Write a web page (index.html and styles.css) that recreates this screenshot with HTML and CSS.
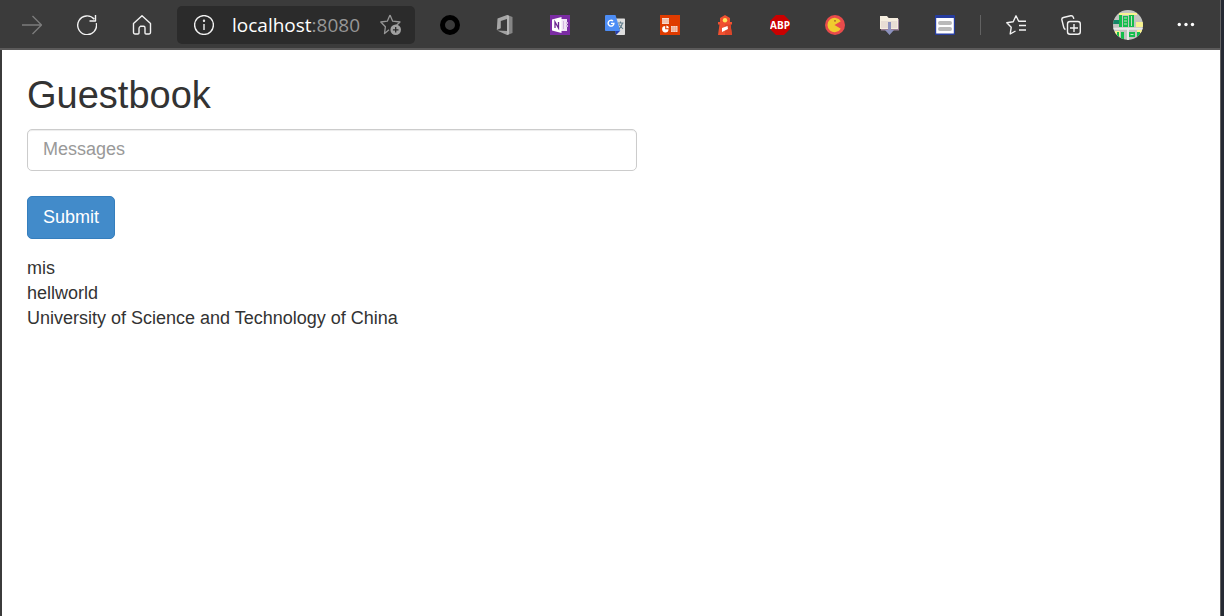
FILE: index.html
```html
<!DOCTYPE html>
<html lang="en">
<head>
<meta charset="utf-8">
<meta name="viewport" content="width=device-width, initial-scale=1">
<title>Guestbook</title>
<link rel="stylesheet" href="styles.css">
</head>
<body>
<div class="browser">
  <header class="toolbar">
    <button class="tool" type="button" aria-label="Forward" disabled>
      <svg class="icon line dim" viewBox="0 0 20 20"><path d="M0 10h19.500M10.500 1l9 9-9 9"/></svg>
    </button>
    <button class="tool" type="button" aria-label="Refresh">
      <svg class="icon line" viewBox="0 0 20 20"><path d="M19.300 8.200A9.400 9.400 0 1 1 17.300 4.200M18.500 0v6h-6"/></svg>
    </button>
    <button class="tool" type="button" aria-label="Home">
      <svg class="icon line" viewBox="0 0 20 20"><path d="M1.500 8.600 10 .7l8.500 7.900v9q0 1.400-1.400 1.400h-3q-1.100 0-1.100-1.100v-5.200q0-1.400-1.400-1.400H8.400Q7 12 7 13.400v4.500Q7 19 5.900 19h-3q-1.400 0-1.400-1.400z"/></svg>
    </button>
    <div class="address">
      <button class="address-tool" type="button" aria-label="Site information">
        <svg class="icon line" viewBox="0 0 20 20"><circle cx="10" cy="10" r="9.400"/><path d="M10 9v6"/><circle cx="10" cy="5.800" r=".5"/></svg>
      </button>
      <a class="url" href="#">localhost<span class="port">:8080</span></a>
      <button class="address-tool" type="button" aria-label="Add to favorites">
        <svg class="star-icon" viewBox="0 0 22 22"><path d="M10 1 12.700 7.200 20 8 15.500 12.200M9 15.700 4.500 19.500 5.400 12.700.8 8 7.300 7.200 10 1" fill="none" stroke="#969696" stroke-width="1.300" stroke-linejoin="round"/><circle cx="15.700" cy="15.800" r="5.300" fill="#a0a0a0"/><path d="M15.700 13v5.600M12.900 15.800h5.600" stroke="#2b2b2b" stroke-width="1.300"/></svg>
      </button>
    </div>
    <nav class="extensions" aria-label="Extensions">
      <button class="tool" type="button" aria-label="Ring extension">
        <svg class="icon" viewBox="0 0 20 20"><circle cx="10" cy="10" r="7.500" fill="none" stroke="#000" stroke-width="5"/></svg>
      </button>
      <button class="tool" type="button" aria-label="Office">
        <svg class="icon" viewBox="0 0 20 20"><path d="M12 0 2.500 3.600 1.800 15l4-1.800V6L12 4z" fill="#a6a6a6"/><path d="M12 0l5.500 2v16L12 20z" fill="#858585"/><path d="M12 0l2 .7v18.500L12 20z" fill="#b4b4b4"/><path d="M2 15.500 12 16v4z" fill="#a0a0a0"/></svg>
      </button>
      <button class="tool" type="button" aria-label="OneNote">
        <svg class="icon" viewBox="0 0 20 20"><path d="M0 0h20v20H0z" fill="#7b2ca4"/><path d="M11 4h6v12h-6z" fill="#f0e4f5"/><path d="M13 6h1v8h-1zM16 7h2v2h-2zm0 3h2v2h-2z" fill="#d3b5e0"/><path d="M2 4.500 11.500 2v16L2 15.500z" fill="#fff"/><path d="M5 13V7l3.500 6V7" fill="none" stroke="#6c2592" stroke-width="1.300"/></svg>
      </button>
      <button class="tool" type="button" aria-label="Google Translate">
        <svg class="icon" viewBox="0 0 20 20"><path d="M9 3.500h10.300q.7 0 .7.700v15q0 .8-.8.800H11z" fill="#dedede"/><path d="M10 16h5l-4 4z" fill="#263ead"/><path d="M1 0h9.500l4.800 16H.9q-.9 0-.9-.9V1q0-1 1-1z" fill="#4d8df5"/><path d="M8 6.100A2.900 2.900 0 1 0 8.900 8.400H6" fill="none" stroke="#fff" stroke-width="1.400"/><path d="M13 8h5.500M15.500 6.500V8M17.500 8q-1 4-3.500 6M14 9.500 18 14" fill="none" stroke="#607d8b" stroke-width="1.100"/></svg>
      </button>
      <button class="tool" type="button" aria-label="Dashboard">
        <svg class="icon" viewBox="0 0 20 20"><path d="M0 0h20v20H0z" fill="#df3b00"/><path d="M2 3h7v6H2zM11 11h6.500v6H11z" fill="#f8d7ca"/><path d="M2 5h7M2 7h7M11 13h6.500M11 15h6.500M13 11v6M15.300 11v6" stroke="#ea997c" stroke-width=".7"/><path d="M5.200 11v3.200h3.300A3.200 3.200 0 1 1 5.200 11z" fill="#fff"/><path d="M6.300 10.500a3 3 0 0 1 2.700 2.700H6.300z" fill="#fff"/></svg>
      </button>
      <button class="tool" type="button" aria-label="Lighthouse">
        <svg class="icon" viewBox="0 0 20 20"><path d="M5 3 10 0l5 3v4h2v2.500h-1.500L17 20H3L4.500 9.500H3V7h2z" fill="#f05030"/><path d="M10 9.500h5.500L17 20h-7z" fill="#dc4529"/><circle cx="10" cy="5.200" r="2.200" fill="#ffe35b"/><path d="M7 13l5.500-2 .5 3-6 3z" fill="#fff"/></svg>
      </button>
      <button class="tool" type="button" aria-label="Adblock Plus">
        <svg class="icon" viewBox="0 0 20 20"><path d="M6 0h8l6 6v8l-6 6H6l-6-6V6z" fill="#ca0000"/><text class="abp" x="10" y="14" text-anchor="middle">ABP</text></svg>
      </button>
      <button class="tool" type="button" aria-label="Pac extension">
        <svg class="icon" viewBox="0 0 20 20"><circle cx="10" cy="10" r="10" fill="#e94b4b"/><path d="M15.800 6.200A7.200 7.200 0 1 0 15.800 13.800L9.500 10z" fill="#f0cb2e"/><circle cx="10" cy="5.800" r=".9" fill="#a16525"/></svg>
      </button>
      <button class="tool" type="button" aria-label="Downloads folder">
        <svg class="icon" viewBox="0 0 20 20"><path d="M1 2h7l1 2h10v11.500H1z" fill="#9a8099"/><path d="M0 1h7l1.500 2H18v11H0z" fill="#f6eedf"/><path d="M1 6h16v7H1z" fill="#e8ddd4"/><path d="M8 7h3v8h3l-4.500 5L5 15h3z" fill="#8c91bd"/></svg>
      </button>
      <button class="tool" type="button" aria-label="Form extension">
        <svg class="icon" viewBox="0 0 20 20"><rect width="20" height="20" rx="1" fill="#263c9f"/><path d="M1.200 3h17.600v15.500H1.200z" fill="#fff"/><path d="M5 8h10M5 14h10" stroke="#b9b9b9" stroke-width="4" stroke-linecap="round"/></svg>
      </button>
    </nav>
    <span class="divider"></span>
    <button class="tool" type="button" aria-label="Favorites">
      <svg class="icon line" viewBox="0 0 20 20"><path d="M9.500 16 4.200 19 5.200 12.300.8 7.700 7.200 6.700 10 .8l2.700 5.400H20M13 10.500h7M13 15h7"/></svg>
    </button>
    <button class="tool" type="button" aria-label="Collections">
      <svg class="icon line" viewBox="0 0 20 20"><rect x="6.500" y="6.500" width="12.800" height="12.800" rx="2.500"/><path d="M13 9v8M9 13h8M4.500 14.500Q3.200 14 2.800 12.500L.9 5Q.4 3 2.400 2.500L9.700.8q2-.4 2.700 1.600l.4 1.500"/></svg>
    </button>
    <button class="tool wide" type="button" aria-label="Profile">
      <svg class="avatar" viewBox="0 0 30 30"><clipPath id="avatar-clip"><circle cx="15" cy="15" r="15"/></clipPath><g clip-path="url(#avatar-clip)"><path d="M0 0h30v30H0z" fill="#c4c4c1"/><path d="M6 3h18v2H6zM23 12h7v5h-7zM2 21h5v5H2zM24 20h5v3h-5z" fill="#f7f390"/><path d="M6 5h3v12H6zM10 6h5v11h-5zM16 5h5v12h-5zM4 22h2v6H4zM8 22h3v7H8zM16 22h6v5h-6zM24 22h3v5h-3z" fill="#13bd4c"/><path d="M0 10h6v4H0z" fill="#168568"/><path d="M0 18.800h30M15 19v11" stroke="#e9e9e9" stroke-width="2"/><path d="M11 8h3M11 11h3M11 14h3M18.500 6v10M17.500 24.500h3" stroke="#c5dfbe"/></g></svg>
    </button>
    <button class="tool wide" type="button" aria-label="Settings and more">
      <svg class="icon" viewBox="0 0 20 20" fill="#fff"><circle cx="3.300" cy="9.500" r="1.700"/><circle cx="10" cy="9.500" r="1.700"/><circle cx="16.500" cy="9.500" r="1.700"/></svg>
    </button>
  </header>
  <main class="page">
    <h1 class="title">Guestbook</h1>
    <form class="guest-form">
      <input class="message-input" type="text" placeholder="Messages" aria-label="Messages">
      <button class="submit" type="submit">Submit</button>
    </form>
    <div class="entries">
      <div>mis</div>
      <div>hellworld</div>
      <div>University of Science and Technology of China</div>
    </div>
  </main>
</div>
</body>
</html>
```
FILE: styles.css
```css
* { box-sizing: border-box; }

body {
  margin: 0;
  padding-right: 3px;
  background: #252a33;
  font-family: "Liberation Sans", Arial, sans-serif;
  font-size: 18px;
  line-height: 25px;
  color: #333;
}

.browser {
  display: flex;
  flex-direction: column;
  min-height: 100vh;
  border-right: 1px solid #636363;
  background: #fff;
}

.toolbar {
  display: flex;
  align-items: center;
  height: 50px;
  padding: 0 5px;
  background: #3b3b3b;
  border-bottom: 2px solid #5b5a5a;
}

.tool {
  display: flex;
  flex: none;
  align-items: center;
  justify-content: center;
  width: 55px;
  height: 48px;
  padding: 2px 1px 0 0;
  border: 0;
  background: none;
}

.wide {
  width: 58px;
  padding-right: 0;
}

.icon {
  width: 20px;
  height: 20px;
}

.line {
  fill: none;
  stroke: #f2f2f2;
  stroke-width: 1.4;
  stroke-linejoin: round;
}

.dim { stroke: #7c7c7c; }

.address {
  display: flex;
  flex: 1;
  align-items: center;
  height: 38px;
  margin: 2px 8px 0 7px;
  padding: 0 13px 0 17px;
  border-radius: 5px;
  background: #2b2b2b;
}

.address-tool {
  display: flex;
  padding: 0;
  border: 0;
  background: none;
}

.star-icon {
  width: 22px;
  height: 22px;
}

.url {
  flex: 1;
  margin-left: 18px;
  font-family: "Open Sans", "Noto Sans", sans-serif;
  font-size: 19px;
  color: #fff;
  text-decoration: none;
}

.port { color: #969696; }

.extensions { display: flex; }

.abp {
  font: bold 10px "Open Sans", sans-serif;
  fill: #fff;
}

.divider {
  width: 1px;
  height: 20px;
  margin: 2px 8px 0 7px;
  background: #626262;
}

.avatar {
  width: 30px;
  height: 30px;
}

.page {
  flex: 1;
  padding: 24px 25px;
  border-left: 2px solid #3b3b3b;
}

.title {
  margin: 0 0 13px;
  font-size: 38px;
  font-weight: 400;
  line-height: 42px;
}

.guest-form {
  display: flex;
  flex-direction: column;
  align-items: flex-start;
  gap: 25px;
  max-width: 610px;
}

.message-input {
  width: 100%;
  height: 42px;
  padding: 6px 15px 8px;
  border: 1px solid #ccc;
  border-radius: 5px;
  box-shadow: inset 0 1px 1px rgba(0, 0, 0, .075);
  font: inherit;
  color: #555;
}

.message-input::placeholder {
  color: #999;
  opacity: 1;
}

.submit {
  height: 43px;
  padding: 0 15px;
  border: 1px solid #357ebd;
  border-radius: 5px;
  background: #428bca;
  font: inherit;
  color: #fff;
}

.entries { margin-top: 17px; }
```
